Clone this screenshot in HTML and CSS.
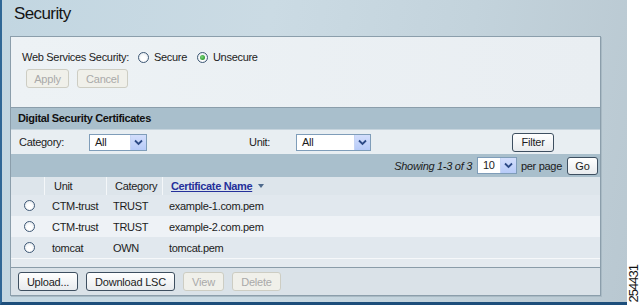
FILE: index.html
```html
<!DOCTYPE html>
<html>
<head>
<meta charset="utf-8">
<link rel="stylesheet" href="styles.css">
</head>
<body>
<div class="frame">
  <div class="title">Security</div>
  <div class="panel">
    <div class="top">
      <div class="radio-row">
        <span class="lbl">Web Services Security:</span>
        <span class="radio r-first"></span><span class="opt">Secure</span>
        <span class="radio checked r-second"></span><span class="opt">Unsecure</span>
      </div>
      <div class="btn-row top-btns">
        <button class="btn disabled w-apply">Apply</button>
        <button class="btn disabled w-cancel">Cancel</button>
      </div>
    </div>
    <div class="band">Digital Security Certificates</div>
    <div class="filter">
      <span class="f-cat">Category:</span>
      <span class="select s-cat"><span class="sel-text">All</span><span class="arrow"><svg width="9" height="7" viewBox="0 0 9 7"><path d="M1 1.5 L4.5 5 L8 1.5" fill="none" stroke="#2c4a86" stroke-width="1.8"/></svg></span></span>
      <span class="f-unit">Unit:</span>
      <span class="select s-unit"><span class="sel-text">All</span><span class="arrow"><svg width="9" height="7" viewBox="0 0 9 7"><path d="M1 1.5 L4.5 5 L8 1.5" fill="none" stroke="#2c4a86" stroke-width="1.8"/></svg></span></span>
      <button class="btn w-filter">Filter</button>
    </div>
    <div class="pager">
      <span class="showing">Showing 1-3 of 3</span>
      <span class="select s-page"><span class="sel-text">10</span><span class="arrow"><svg width="9" height="7" viewBox="0 0 9 7"><path d="M1 1.5 L4.5 5 L8 1.5" fill="none" stroke="#2c4a86" stroke-width="1.8"/></svg></span></span>
      <span class="perpage">per page</span>
      <button class="btn w-go">Go</button>
    </div>
    <div class="table">
      <div class="tr th">
        <div class="c1"></div>
        <div class="c2">Unit</div>
        <div class="c3">Category</div>
        <div class="c4"><span class="sortlink">Certificate Name</span><span class="sort-arrow"></span></div>
      </div>
      <div class="tr odd">
        <div class="c1"><span class="radio"></span></div>
        <div class="c2">CTM-trust</div>
        <div class="c3">TRUST</div>
        <div class="c4">example-1.com.pem</div>
      </div>
      <div class="tr even">
        <div class="c1"><span class="radio"></span></div>
        <div class="c2">CTM-trust</div>
        <div class="c3">TRUST</div>
        <div class="c4">example-2.com.pem</div>
      </div>
      <div class="tr odd">
        <div class="c1"><span class="radio"></span></div>
        <div class="c2">tomcat</div>
        <div class="c3">OWN</div>
        <div class="c4">tomcat.pem</div>
      </div>
      <div class="filler"></div>
    </div>
    <div class="btn-row bottom-btns">
      <button class="btn w-upload">Upload...</button>
      <button class="btn w-dl">Download LSC</button>
      <button class="btn disabled w-view">View</button>
      <button class="btn disabled w-delete">Delete</button>
    </div>
  </div>
</div>
<div class="stamp">254431</div>
</body>
</html>
```

FILE: styles.css
```css
html, body {
  margin: 0;
  padding: 0;
  background: #ffffff;
}
body {
  display: flex;
  align-items: flex-start;
  width: 641px;
  height: 305px;
  overflow: hidden;
  font-family: "Liberation Sans", Arial, sans-serif;
  font-size: 11px;
  letter-spacing: -0.3px;
  color: #1c1c1c;
}
.frame {
  width: 625px;
  height: 302px;
  border-left: 2px solid #2f6796;
  border-bottom: 3px solid #1d4e7b;
  background: linear-gradient(100deg, #c2d6e1 0%, #cbdbe4 40%, #c3d3dc 70%, #b9c8d1 100%);
  display: flex;
  flex-direction: column;
}
.title {
  height: 32px;
  padding: 4px 0 0 12px;
  font-size: 17px;
  line-height: 20px;
  letter-spacing: -0.6px;
  color: #141414;
}
.panel {
  margin-left: 8px;
  width: 589px;
  border: 1px solid #8b9eab;
  box-shadow: 1px 1px 0 #a9bac4;
  display: flex;
  flex-direction: column;
}
.top {
  height: 70px;
  background: linear-gradient(90deg, #edf2f5, #e9eef2);
  display: flex;
  flex-direction: column;
}
.radio-row {
  display: flex;
  align-items: center;
  height: 20px;
  margin-top: 10px;
  padding-left: 11px;
}
.radio {
  display: inline-block;
  box-sizing: border-box;
  width: 11px;
  height: 11px;
  border: 1px solid #3e5875;
  border-radius: 50%;
  background: radial-gradient(circle at 50% 60%, #ffffff 30%, #dce3e9 100%);
  position: relative;
}
.radio.checked::after {
  content: "";
  position: absolute;
  left: 2px;
  top: 2px;
  width: 5px;
  height: 5px;
  border-radius: 50%;
  background: radial-gradient(circle at 40% 40%, #7fd67f 0%, #2f9e30 70%);
}
.r-first { margin-left: 9px; }
.r-second { margin-left: 10px; }
.opt { margin-left: 5px; }
.btn-row {
  display: flex;
  gap: 8px;
}
.top-btns {
  margin-top: 2px;
  padding-left: 15px;
}
.btn {
  box-sizing: border-box;
  height: 19px;
  padding: 0;
  border: 1px solid #3e4f60;
  border-radius: 3px;
  background: linear-gradient(#ffffff, #e8ebee);
  font-family: "Liberation Sans", Arial, sans-serif;
  font-size: 11px;
  letter-spacing: -0.2px;
  color: #1c1c1c;
  text-align: center;
}
.btn.disabled {
  border-color: #cdcdc3;
  background: #f0f0ea;
  color: #a9a9a9;
}
.w-apply { width: 43px; }
.w-cancel { width: 51px; }
.w-filter { width: 42px; margin-left: 141px; }
.w-go { width: 31px; height: 18px; margin-left: 5px; }
.w-upload { width: 60px; }
.w-dl { width: 89px; }
.w-view { width: 41px; }
.w-delete { width: 49px; }
.band {
  height: 21px;
  border-top: 1px solid #8b9eab;
  background: #a9bfcc;
  padding-left: 7px;
  font-weight: bold;
  line-height: 21px;
  letter-spacing: -0.35px;
  color: #111;
}
.filter {
  height: 24px;
  border-top: 1px solid #c6d4dd;
  background: #e8eef2;
  display: flex;
  align-items: center;
  padding-left: 8px;
}
.f-cat { width: 70px; }
.f-unit { width: 47px; margin-left: 102px; }
.select {
  box-sizing: border-box;
  height: 17px;
  border: 1px solid #7f9db9;
  background: #ffffff;
  display: flex;
  align-items: stretch;
}
.sel-text {
  flex: 1;
  padding-left: 5px;
  line-height: 15px;
}
.arrow {
  width: 15px;
  background: linear-gradient(#d3defc, #b7cbf8);
  border-left: 1px solid #c6d5f5;
  display: flex;
  align-items: center;
  justify-content: center;
}
.s-cat { width: 58px; }
.s-unit { width: 75px; }
.s-page { width: 40px; margin-left: 5px; }
.pager {
  height: 23px;
  background: #a9bfcc;
  display: flex;
  align-items: center;
  justify-content: flex-end;
  padding-right: 2px;
}
.showing { font-style: italic; }
.perpage { margin-left: 4px; }
.table {
  display: flex;
  flex-direction: column;
}
.tr {
  display: flex;
  align-items: center;
  height: 21px;
}
.th {
  height: 18px;
  background: #dde5eb;
}
.th > div {
  height: 18px;
  line-height: 18px;
}
.th .c2, .th .c3, .th .c4 {
  border-left: 1px solid #f4f7f9;
}
.odd { background: #e1e8ee; }
.even { background: #eef2f6; }
.c1 { width: 33px; display: flex; align-items: center; }
.c1 .radio { margin-left: 13px; }
.c2 { width: 54px; padding-left: 8px; }
.c3 { width: 49px; padding-left: 7px; }
.c4 { flex: 1; padding-left: 7px; display: flex; align-items: center; }
.th .c2 { width: 52px; padding-left: 9px; }
.th .c3 { width: 47px; padding-left: 8px; }
.th .c4 { padding-left: 8px; }
.sortlink {
  font-weight: bold;
  color: #24309a;
  text-decoration: underline;
  letter-spacing: -0.35px;
}
.sort-arrow {
  margin-left: 6px;
  width: 0;
  height: 0;
  border-left: 3px solid transparent;
  border-right: 3px solid transparent;
  border-top: 4px solid #4e6a8c;
}
.filler {
  height: 8px;
  border-top: 1px solid #f6f8fa;
  border-bottom: 1px solid #8a9ca8;
  background: #e4eaef;
}
.bottom-btns {
  height: 27px;
  box-sizing: border-box;
  padding: 4px 0 0 7px;
  background: #dae2e8;
}
.stamp {
  align-self: flex-end;
  margin-bottom: 3px;
  margin-left: 1px;
  writing-mode: vertical-rl;
  transform: rotate(180deg);
  font-size: 13px;
  letter-spacing: -1px;
  line-height: 12px;
  color: #111;
}
```
